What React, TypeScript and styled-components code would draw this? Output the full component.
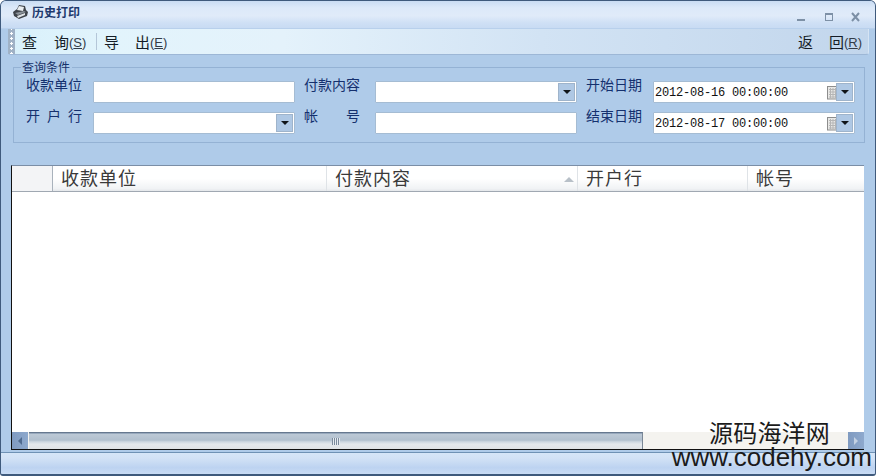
import React from "react";
import styled, { createGlobalStyle } from "styled-components";

const cjk = `"Noto Sans CJK SC", "Liberation Sans", sans-serif`;

const Global = createGlobalStyle`
  html, body { margin: 0; padding: 0; overflow: hidden; background: #fff; }
  * { box-sizing: border-box; }
`;

const Window = styled.div`
  position: relative;
  width: 876px;
  height: 476px;
  display: flex;
  flex-direction: column;
  font-family: ${cjk};
  background: #afcbe9;
  border: 1px solid #3f5a7c;
  border-bottom-width: 2px;
  border-radius: 6px 6px 3px 3px;
  overflow: hidden;
`;

const TitleBar = styled.div`
  height: 28px;
  flex: none;
  display: flex;
  align-items: center;
  padding: 0 13px 6px 11px;
  background: linear-gradient(#c9dcf3 0%, #dce9f9 25%, #e0ebf9 55%, #cfe0f5 80%, #c8dbf3 100%);
  border-bottom: 1px solid #b8d0ec;
`;

const TitleIcon = styled.svg`
  width: 17px;
  height: 16px;
  flex: none;
  margin-top: 1px;
`;

const TitleText = styled.span`
  margin-left: 3px;
  font-size: 12px;
  font-weight: 700;
  color: #1e3a6e;
`;

const WinButtons = styled.div`
  margin-left: auto;
  display: flex;
  gap: 15px;
  align-items: center;
  margin-top: 11px;
`;

const WinIcon = styled.svg`
  width: 12px;
  height: 10px;
  display: block;
`;

const Toolbar = styled.div`
  height: 26px;
  flex: none;
  margin: 0 6px 0 7px;
  padding-right: 7px;
  display: flex;
  align-items: center;
  border-radius: 0 0 3px 3px;
  border-bottom: 1px solid #9db7d6;
  border-right: 1px solid #d5e4f4;
  background: linear-gradient(90deg, #d8f0fb 0%, #e2f4fc 12%, #e4f2fb 32%, #d2e3f4 62%, #c2d6ec 100%);
  color: #1a1a1a;
`;

const Grip = styled.div`
  width: 7px;
  height: 100%;
  flex: none;
  margin-right: 7px;
  background: radial-gradient(circle, #fff 1px, transparent 1.3px) 0 2px / 7px 5px #a0b2c6;
`;

const ToolButton = styled.div<{ $w: number }>`
  width: ${(p) => p.$w}px;
  display: flex;
  justify-content: space-between;
  align-items: center;
  font-size: 15px;
  line-height: 20px;
  color: #141c26;
`;

const Hotkey = styled.span`
  display: inline-block;
  width: 17px;
  font-family: "Liberation Sans", sans-serif;
  font-size: 13px;
  margin-top: 3px;
  color: #333c48;
  white-space: nowrap;
  u { text-decoration-thickness: 1px; }
`;

const ToolChar = styled.span`
  width: 15px;
`;

const Rest = styled.span`
  display: flex;
  align-items: center;
`;

const ToolSep = styled.div`
  width: 1px;
  height: 17px;
  margin: 0 7px 0 10px;
  background: #b4c6d8;
`;

const Spacer = styled.div`
  flex: 1;
`;

const Group = styled.fieldset`
  margin: 6px 10px 0 12px;
  padding: 0 9px 0 12px;
  height: 82px;
  flex: none;
  border: 1px solid #94b2d4;
  min-width: 0;
  display: block;
`;

const Legend = styled.legend`
  font-size: 12px;
  line-height: 12px;
  padding: 0 2px 0 1px;
  margin-left: -5px;
  color: #15316a;
  height: 12px;
`;

const FieldGrid = styled.div`
  display: grid;
  grid-template-columns: 67px 202px 80px 202px 76px 202px;
  row-gap: 9px;
  margin-top: 8px;
  & > *:nth-child(6n + 3), & > *:nth-child(6n + 5) { padding-left: 9px; }
`;

const Label = styled.div<{ $spread?: boolean }>`
  font-size: 14px;
  line-height: 18px;
  height: 22px;
  color: #14306e;
  width: 100%;
  margin-top: -6px;
  padding-right: 11px;
  white-space: pre;
  ${(p) => (p.$spread ? "display:flex; justify-content: space-between;" : "")}
`;

const SpreadName = styled(Label)`
  padding-right: 15px;
`;

const Input = styled.div`
  height: 22px;
  background: #fff;
  border: 1px solid #a5bcd3;
  border-radius: 1px;
  display: flex;
  align-items: center;
  justify-content: flex-end;
  position: relative;
  padding-right: 1px;
`;

const DropBtn = styled.div`
  width: 17px;
  height: 18px;
  background: #afc8e4;
  border: 1px solid #9fb4cb;
  display: flex;
  align-items: center;
  justify-content: center;
  position: relative;
`;

const Caret = styled.div`
  width: 0;
  height: 0;
  border-left: 4px solid transparent;
  border-right: 4px solid transparent;
  border-top: 4px solid #101418;
`;

const DateValue = styled.span`
  position: absolute;
  left: 1px;
  top: 3px;
  font-family: "Liberation Mono", monospace;
  font-size: 12px;
  line-height: 16px;
  letter-spacing: -0.2px;
  color: #111;
`;

const CalIcon = styled.svg`
  width: 14px;
  height: 15px;
  flex: none;
  margin-right: -5px;
`;

const Grid = styled.div`
  margin: 22px 11px 0 10px;
  height: 285px;
  flex: none;
  background: #fff;
  border-left: 1px solid #111;
  border-bottom: 1px solid #111;
  border-top: 1px solid #7b8ea6;
  display: flex;
  flex-direction: column;
`;

const HeaderRow = styled.div`
  height: 26px;
  flex: none;
  display: flex;
  background: linear-gradient(#fff 0%, #fff 50%, #f1f3f5 90%, #e4e7ea 100%);
  border-bottom: 1px solid #a0a8b2;
`;

const HeaderCell = styled.div<{ $w?: number }>`
  ${(p) => (p.$w ? `width: ${p.$w}px; flex: none;` : "flex: 1;")}
  border-right: 1px solid #dfe3e7;
  padding: 0 0 3px 8px;
  font-size: 18px;
  line-height: 24px;
  letter-spacing: 1px;
  color: #3a3a3a;
  display: flex;
  align-items: center;
  position: relative;
  &:last-child { border-right: 0; }
`;

const Corner = styled(HeaderCell)`
  background: #f3f4f6;
  border-right: 1px solid #a9b2bc;
`;

const SortArrow = styled.div`
  position: absolute;
  right: 3px;
  top: 11px;
  width: 0;
  height: 0;
  border-left: 5px solid transparent;
  border-right: 5px solid transparent;
  border-bottom: 5px solid #b8c0c8;
`;

const Body = styled.div`
  flex: 1;
  background: #fff;
`;

const ScrollBar = styled.div`
  height: 17px;
  flex: none;
  display: flex;
  background: #f4f3ef;
`;

const ScrollBtn = styled.div`
  width: 16px;
  flex: none;
  background: linear-gradient(90deg, #7f9ac0, #8ea9cd);
  display: flex;
  align-items: center;
  justify-content: center;
`;

const ScrollArrow = styled.div<{ $right?: boolean }>`
  width: 0;
  height: 0;
  border-top: 4px solid transparent;
  border-bottom: 4px solid transparent;
  ${(p) => (p.$right ? "border-left: 4px solid #c4d2e4;" : "border-right: 4px solid #4f6a8e;")}
`;

const Thumb = styled.div`
  width: 614px;
  flex: none;
  margin-left: 1px;
  background: linear-gradient(#7f93ab 0%, #bcc9d6 8%, #b2c0ce 45%, #cdd7e0 55%, #e4e8ec 70%, #e0e3e6 100%);
  border-right: 1px solid #7a8796;
  border-top: 1px solid #66788f;
  display: flex;
  align-items: center;
  justify-content: center;
`;

const ThumbGrip = styled.div`
  width: 8px;
  height: 7px;
  background: repeating-linear-gradient(90deg, #7b8a9c 0 1px, #e6ebf0 1px 2px);
`;

const StatusBar = styled.div`
  flex: 1;
  margin-top: 2px;
  border-top: 1px solid #6f92b5;
  background: linear-gradient(#d6e6f8 0%, #d2e2f6 25%, #bdd3f1 70%, #c9dcf4 100%);
`;

const Watermark = styled.div`
  position: absolute;
  right: 3px;
  bottom: 5px;
  width: 210px;
  text-align: right;
  color: #1b1b1b;
`;

const WmCn = styled.div`
  font-size: 24px;
  line-height: 26px;
  margin-right: 42px;
  letter-spacing: 0.2px;
`;

const WmEn = styled.div`
  font-family: "Liberation Sans", sans-serif;
  font-size: 26px;
  line-height: 24px;
`;

const Tool = ({ a, b, k, w }: { a: string; b: string; k?: string; w: number }) => (
  <ToolButton $w={w}>
    <ToolChar>{a}</ToolChar>
    <Rest>
      <ToolChar>{b}</ToolChar>
      {k && (
        <Hotkey>
          (<u>{k}</u>)
        </Hotkey>
      )}
    </Rest>
  </ToolButton>
);

const Combo = () => (
  <Input>
    <DropBtn>
      <Caret />
    </DropBtn>
  </Input>
);

const DateBox = ({ value }: { value: string }) => (
  <Input>
    <DateValue>{value}</DateValue>
    <CalIcon viewBox="0 0 14 15">
      <rect x="0.5" y="1.5" width="13" height="12.5" fill="#e8e8e6" stroke="#8d8d8d" />
      <path d="M2 4.5h8M2 7h8M2 9.5h8M2 12h8M3.5 3v10M6 3v10M8.5 3v10" stroke="#b5b5b5" fill="none" />
    </CalIcon>
    <DropBtn>
      <Caret />
    </DropBtn>
  </Input>
);

export default function App() {
  return (
    <>
      <Global />
      <Window>
        <TitleBar>
          <TitleIcon viewBox="0 0 17 16">
            <path d="M1 8l4-3 2-4 6 1 1 4 2 2-1 4-8 3-5-3z" fill="#3e4349" />
            <path d="M5 6l2-4 5 1-1 4z" fill="#e9edf0" />
            <path d="M3 9l9-2 2 1-8 3z" fill="#8a9198" />
            <path d="M5 12l8-3 0 2-7 3z" fill="#dfe3e6" />
          </TitleIcon>
          <TitleText>历史打印</TitleText>
          <WinButtons>
            <WinIcon viewBox="0 0 12 10">
              <rect x="1" y="7" width="8" height="2" fill="#7d90a6" />
            </WinIcon>
            <WinIcon viewBox="0 0 12 10">
              <rect x="2.5" y="1.500" width="7" height="7" fill="none" stroke="#7d90a6" />
              <rect x="2" y="1" width="8" height="2" fill="#7d90a6" />
            </WinIcon>
            <WinIcon viewBox="0 0 12 10">
              <path d="M2 1l7 8M9 1l-7 8" stroke="#7d90a6" strokeWidth="2" fill="none" />
            </WinIcon>
          </WinButtons>
        </TitleBar>
        <Toolbar>
          <Grip />
          <Tool a="查" b="询" k="S" w={64} />
          <ToolSep />
          <Tool a="导" b="出" k="E" w={63} />
          <Spacer />
          <Tool a="返" b="回" k="R" w={63} />
        </Toolbar>
        <Group>
          <Legend>查询条件</Legend>
          <FieldGrid>
            <Label>收款单位</Label>
            <Input />
            <Label>付款内容</Label>
            <Combo />
            <Label>开始日期</Label>
            <DateBox value="2012-08-16 00:00:00" />
            <Label $spread>
              <span>开</span>
              <span>户</span>
              <span>行</span>
            </Label>
            <Combo />
            <SpreadName $spread>
              <span>帐</span>
              <span>号</span>
            </SpreadName>
            <Input />
            <Label>结束日期</Label>
            <DateBox value="2012-08-17 00:00:00" />
          </FieldGrid>
        </Group>
        <Grid>
          <HeaderRow>
            <Corner $w={41} />
            <HeaderCell $w={274}>收款单位</HeaderCell>
            <HeaderCell $w={251}>
              付款内容
              <SortArrow />
            </HeaderCell>
            <HeaderCell $w={170}>开户行</HeaderCell>
            <HeaderCell>帐号</HeaderCell>
          </HeaderRow>
          <Body />
          <ScrollBar>
            <ScrollBtn>
              <ScrollArrow />
            </ScrollBtn>
            <Thumb>
              <ThumbGrip />
            </Thumb>
            <Spacer />
            <ScrollBtn>
              <ScrollArrow $right />
            </ScrollBtn>
          </ScrollBar>
        </Grid>
        <StatusBar />
        <Watermark>
          <WmCn>源码海洋网</WmCn>
          <WmEn>www.codehy.com</WmEn>
        </Watermark>
      </Window>
    </>
  );
}
